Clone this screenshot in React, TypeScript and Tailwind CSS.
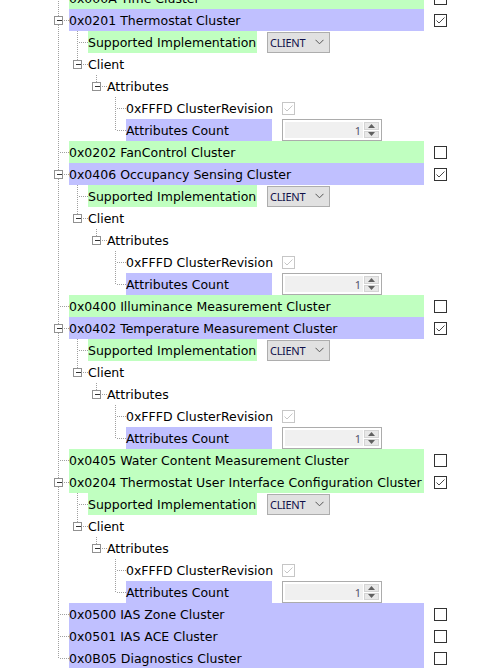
import React from 'react';

type Tone = 'green' | 'purple';

interface Cluster {
  id: string;
  name: string;
  tone: Tone;
  checked: boolean;
  expanded?: boolean;
}

const clusters: Cluster[] = [
  { id: '0x000A', name: 'Time Cluster', tone: 'green', checked: false },
  { id: '0x0201', name: 'Thermostat Cluster', tone: 'purple', checked: true, expanded: true },
  { id: '0x0202', name: 'FanControl Cluster', tone: 'green', checked: false },
  { id: '0x0406', name: 'Occupancy Sensing Cluster', tone: 'purple', checked: true, expanded: true },
  { id: '0x0400', name: 'Illuminance Measurement Cluster', tone: 'green', checked: false },
  { id: '0x0402', name: 'Temperature Measurement Cluster', tone: 'purple', checked: true, expanded: true },
  { id: '0x0405', name: 'Water Content Measurement Cluster', tone: 'green', checked: false },
  { id: '0x0204', name: 'Thermostat User Interface Configuration Cluster', tone: 'green', checked: true, expanded: true },
  { id: '0x0500', name: 'IAS Zone Cluster', tone: 'purple', checked: false },
  { id: '0x0501', name: 'IAS ACE Cluster', tone: 'purple', checked: false },
  { id: '0x0B05', name: 'Diagnostics Cluster', tone: 'purple', checked: false },
];

const LINE = '#a0a0a0';

// guides: one flag per ancestor level (draw a through line or not)
function Guides({ guides, last, expander }: { guides: boolean[]; last: boolean; expander?: boolean }) {
  const depth = guides.length + 1;
  const w = depth * 19;
  const own = (depth - 1) * 19 + 8.5;
  return (
    <svg width={w} height={22} className="shrink-0" shapeRendering="crispEdges">
      {guides.map((g, i) =>
        g ? (
          <line key={i} x1={i * 19 + 8.5} y1={0} x2={i * 19 + 8.5} y2={22} stroke={LINE} strokeDasharray="1 1" />
        ) : null
      )}
      <line x1={own} y1={0} x2={own} y2={last ? 11.5 : 22} stroke={LINE} strokeDasharray="1 1" />
      <line x1={own + 1} y1={11.5} x2={w} y2={11.5} stroke={LINE} strokeDasharray="1 1" />
      {expander && (
        <>
          <rect x={own - 4} y={7.5} width={8} height={8} fill="#ffffff" stroke="#919191" />
          <line x1={own - 2} y1={11.5} x2={own + 3} y2={11.5} stroke="#333333" />
        </>
      )}
    </svg>
  );
}

function CheckBox({ checked, disabled }: { checked?: boolean; disabled?: boolean }) {
  const c = disabled ? '#c6c6c6' : '#333333';
  return (
    <svg width={13} height={13} className="shrink-0" shapeRendering="crispEdges">
      <rect x={0.5} y={0.5} width={12} height={12} fill="#ffffff" stroke={c} />
      {checked && (
        <polyline points="2.5,6.5 5,9 10.5,3.5" fill="none" stroke={disabled ? '#c6c6c6' : '#4a4a4a'} strokeWidth={1} shapeRendering="auto" />
      )}
    </svg>
  );
}

function Select() {
  return (
    <div className="flex h-[21px] w-[63px] items-center justify-between border border-[#adadad] bg-[#e1e1e1] pl-[2px] pr-[5px] font-['Noto_Sans',sans-serif] text-[11px] leading-none tracking-[-0.3px] text-[#10104a]">
      <span>CLIENT</span>
      <svg width={9} height={6} viewBox="0 0 9 6">
        <polyline points="0.5,0.8 4.5,4.8 8.5,0.8" fill="none" stroke="#555555" strokeWidth={1} />
      </svg>
    </div>
  );
}

function Spinner() {
  return (
    <div className="flex h-[22px] w-[100px] border border-[#acacac] bg-white p-[2px]">
      <div className="flex flex-1 items-center justify-end bg-[#f0f0f0] pr-[2px] font-['Noto_Sans',sans-serif] text-[11px] leading-none text-[#54546d]">
        1
      </div>
      <div className="flex w-[16px] flex-col gap-[1px] pl-[1px]">
        <div className="flex flex-1 items-center justify-center border border-[#d4d4d4] bg-[#e8e8e8]">
          <svg width={7} height={4}>
            <polygon points="3.5,0 7,4 0,4" fill="#606060" />
          </svg>
        </div>
        <div className="flex flex-1 items-center justify-center border border-[#d4d4d4] bg-[#e8e8e8]">
          <svg width={7} height={4}>
            <polygon points="0,0 7,0 3.5,4" fill="#606060" />
          </svg>
        </div>
      </div>
    </div>
  );
}

const toneBg: Record<Tone, string> = {
  green: 'bg-[#c0ffc0]',
  purple: 'bg-[#c0c0ff]',
};

function Row({ children }: { children: React.ReactNode }) {
  return <div className="flex h-[22px] items-center whitespace-nowrap pl-[50px]">{children}</div>;
}

function ClusterBlock({ cluster, last }: { cluster: Cluster; last: boolean }) {
  const through = !last;
  return (
    <>
      <Row>
        <Guides guides={[]} last={last} expander={cluster.expanded} />
        <div className={`h-[22px] w-[355px] shrink-0 pt-[1px] leading-[22px] ${toneBg[cluster.tone]}`}>
          {cluster.id} {cluster.name}
        </div>
        <div className="ml-[10px]">
          <CheckBox checked={cluster.checked} />
        </div>
      </Row>
      {cluster.expanded && (
        <>
          <Row>
            <Guides guides={[through]} last={false} />
            <div className="h-[22px] w-[169px] shrink-0 bg-[#c0ffc0] pt-[1px] leading-[22px]">Supported Implementation</div>
            <div className="ml-[10px]">
              <Select />
            </div>
          </Row>
          <Row>
            <Guides guides={[through]} last expander />
            <span className="pt-[1px] leading-[22px]">Client</span>
          </Row>
          <Row>
            <Guides guides={[through, false]} last expander />
            <span className="pt-[1px] leading-[22px]">Attributes</span>
          </Row>
          <Row>
            <Guides guides={[through, false, false]} last={false} />
            <div className="w-[156px] shrink-0 pt-[1px] leading-[22px]">0xFFFD ClusterRevision</div>
            <CheckBox checked disabled />
          </Row>
          <Row>
            <Guides guides={[through, false, false]} last />
            <div className="h-[22px] w-[146px] shrink-0 bg-[#c0c0ff] pt-[1px] leading-[22px]">Attributes Count</div>
            <div className="ml-[10px]">
              <Spinner />
            </div>
          </Row>
        </>
      )}
    </>
  );
}

export default function App() {
  return (
    <div className="h-[668px] w-[485px] overflow-hidden bg-white font-['DejaVu_Sans',sans-serif] text-[12.5px] text-black">
      <div className="-mt-[13px]">
        {clusters.map((c, i) => (
          <ClusterBlock key={c.id} cluster={c} last={i === clusters.length - 1} />
        ))}
      </div>
    </div>
  );
}
